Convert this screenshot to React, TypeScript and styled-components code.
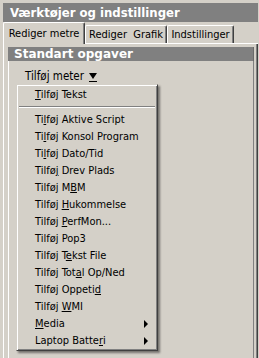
import styled, { createGlobalStyle } from "styled-components";

const GlobalStyle = createGlobalStyle`
  html, body {
    margin: 0;
    padding: 0;
    background: #d4d0c8;
  }
`;

const UI_FONT = `"DejaVu Sans Condensed", "DejaVu Sans", "Liberation Sans", sans-serif`;

const Window = styled.div`
  width: 259px;
  height: 358px;
  box-sizing: border-box;
  padding: 3px 1px 0 3px;
  background: #d4d0c8;
  display: flex;
  flex-direction: column;
  overflow: hidden;
  position: relative;
  font-family: ${UI_FONT};
  font-size: 11px;
  color: #000;
`;

const TitleBar = styled.div`
  height: 19px;
  line-height: 19px;
  background: #808080;
  color: #fff;
  font-family: ${UI_FONT};
  font-weight: bold;
  font-size: 13px;
  padding-left: 7px;
  white-space: nowrap;
`;

const TabRow = styled.div`
  display: flex;
  align-items: flex-end;
  height: 21px;
  border-bottom: 1px solid #fff;
`;

const Tab = styled.div<{ $active?: boolean; $w: number }>`
  box-sizing: border-box;
  height: ${(p) => (p.$active ? "22px" : "18px")};
  margin-bottom: ${(p) => (p.$active ? "-1px" : "0")};
  padding-top: ${(p) => (p.$active ? "4px" : "2px")};
  width: ${(p) => p.$w}px;
  text-align: center;
  background: #d4d0c8;
  border-top: 1px solid #fff;
  border-left: 1px solid #fff;
  border-right: 1px solid #404040;
  box-shadow: inset -1px 0 0 #808080;
  border-radius: 2px 2px 0 0;
  white-space: nowrap;
  font-size: 11px;
  position: relative;
  z-index: ${(p) => (p.$active ? 1 : 0)};
`;

const TabPage = styled.div`
  flex: 1;
  border-left: 1px solid #fff;
  border-right: 1px solid #404040;
  box-shadow: inset -1px 0 0 #808080;
  padding: 3px 3px 0 4px;
  display: flex;
  flex-direction: column;
`;

const Panel = styled.div`
  flex: 1;
  display: flex;
  flex-direction: column;
`;

const PanelHeader = styled.div`
  height: 14px;
  line-height: 14px;
  background: #808080;
  color: #fff;
  font-family: "DejaVu Sans", Verdana, sans-serif;
  font-weight: bold;
  font-size: 12px;
  padding-left: 6px;
  border-right: 1px solid #6a6a6a;
`;

const PanelBody = styled.div`
  flex: 1;
  border-left: 1px solid #fff;
  border-right: 1px solid #808080;
  padding: 8px 0 0 16px;
`;

const MeterLink = styled.div`
  display: flex;
  align-items: center;
  gap: 5px;
  height: 14px;
  font-size: 11.5px;
`;

const DropArrow = styled.span`
  display: inline-flex;
  flex-direction: column;
  align-items: center;
  gap: 2px;
  margin-top: 2px;

  &::before {
    content: "";
    width: 0;
    height: 0;
    border-left: 4px solid transparent;
    border-right: 4px solid transparent;
    border-top: 6px solid #000;
  }

  &::after {
    content: "";
    width: 8px;
    height: 1px;
    background: #000;
  }
`;

const Menu = styled.div`
  position: absolute;
  left: 16px;
  top: 84px;
  width: 142px;
  box-sizing: border-box;
  padding: 1px;
  background: #d4d0c8;
  border-top: 1px solid #d4d0c8;
  border-left: 1px solid #d4d0c8;
  border-right: 1px solid #404040;
  border-bottom: 1px solid #404040;
  box-shadow: inset 1px 1px 0 #fff, inset -1px -1px 0 #808080,
    2px 2px 2px rgba(0, 0, 0, 0.45);
  z-index: 5;
`;

const MenuItem = styled.div`
  height: 17px;
  line-height: 17px;
  padding-left: 17px;
  position: relative;
  white-space: nowrap;
`;

const SubArrow = styled.span`
  position: absolute;
  right: 8px;
  top: 5px;
  width: 0;
  height: 0;
  border-top: 4px solid transparent;
  border-bottom: 4px solid transparent;
  border-left: 4px solid #000;
`;

const Separator = styled.div`
  height: 8px;
  display: flex;
  align-items: center;
  padding: 0 1px;

  &::before {
    content: "";
    flex: 1;
    height: 1px;
    background: #808080;
    border-bottom: 1px solid #fff;
  }
`;

const U = styled.span`
  text-decoration: underline;
`;

type Item = { pre: string; key: string; post: string; sub?: boolean };

const items: Item[] = [
  { pre: "Ti", key: "l", post: "føj Aktive Script" },
  { pre: "Ti", key: "l", post: "føj Konsol Program" },
  { pre: "Ti", key: "l", post: "føj Dato/Tid" },
  { pre: "Tilfø", key: "j", post: " Drev Plads" },
  { pre: "Tilføj M", key: "B", post: "M" },
  { pre: "Tilføj ", key: "H", post: "ukommelse" },
  { pre: "Tilføj ", key: "P", post: "erfMon..." },
  { pre: "Tilføj Pop3", key: "", post: "" },
  { pre: "Tilføj T", key: "e", post: "kst File" },
  { pre: "Tilføj Tot", key: "a", post: "l Op/Ned" },
  { pre: "Tilføj Oppeti", key: "d", post: "" },
  { pre: "Tilføj ", key: "W", post: "MI" },
  { pre: "", key: "M", post: "edia", sub: true },
  { pre: "Laptop Batte", key: "r", post: "i", sub: true },
];

export default function App() {
  return (
    <>
      <GlobalStyle />
      <Window>
        <TitleBar>Værktøjer og indstillinger</TitleBar>
        <TabRow>
          <Tab $active $w={82}>Rediger metre</Tab>
          <Tab $w={82}>Rediger&nbsp;&nbsp;Grafik</Tab>
          <Tab $w={67}>Indstillinger</Tab>
        </TabRow>
        <TabPage>
          <Panel>
            <PanelHeader>Standart opgaver</PanelHeader>
            <PanelBody>
              <MeterLink>
                <span>Tilføj meter</span>
                <DropArrow />
              </MeterLink>
            </PanelBody>
          </Panel>
        </TabPage>

        <Menu>
          <MenuItem>
            <U>T</U>ilføj Tekst
          </MenuItem>
          <Separator />
          {items.map((it, i) => (
            <MenuItem key={i}>
              {it.pre}
              {it.key && <U>{it.key}</U>}
              {it.post}
              {it.sub && <SubArrow />}
            </MenuItem>
          ))}
        </Menu>
      </Window>
    </>
  );
}
